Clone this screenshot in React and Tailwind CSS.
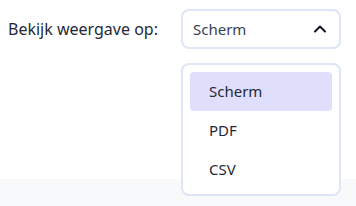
import React, { useState } from 'react';
import { ChevronUp } from 'lucide-react';

const options = ['Scherm', 'PDF', 'CSV'];

export default function App() {
  const [selected, setSelected] = useState('Scherm');

  return (
    <div className="w-[356px] h-[206px] bg-white font-['Noto_Sans',sans-serif] text-[15px] text-[#1f2937] flex flex-col">
      <div className="flex-1 flex items-start px-2 pt-[9px]">
        <span className="w-[173px] h-10 flex items-center text-[16px]">Bekijk weergave op:</span>
        <div className="relative">
          <button className="w-40 h-10 border-2 border-[#dde5f6] rounded-lg flex items-center justify-between pl-[10px] pr-[9px] text-[#374151]">
            <span>{selected}</span>
            <ChevronUp size={20} strokeWidth={2.5} className="text-[#111827]" />
          </button>
          <ul className="absolute left-0 top-[54px] w-40 h-[133px] bg-white border-2 border-[#dde5f6] rounded-lg p-[7px] z-10">
            {options.map((o) => (
              <li
                key={o}
                onClick={() => setSelected(o)}
                className={`h-[39px] flex items-center pl-[19px] rounded ${o === selected ? 'bg-[#dfdffb]' : ''}`}
              >
                {o}
              </li>
            ))}
          </ul>
        </div>
      </div>
      <div className="h-[27px] bg-[#f8f9fb]" />
    </div>
  );
}
